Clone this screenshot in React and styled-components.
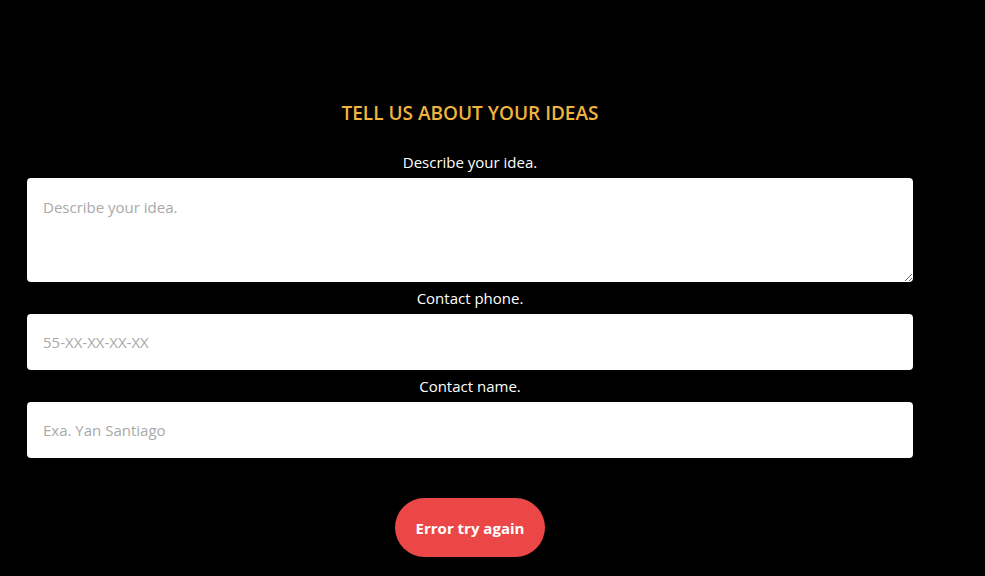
import React from "react";
import styled, { createGlobalStyle } from "styled-components";

const GlobalStyle = createGlobalStyle`
  body {
    margin: 0;
    background: #000000;
    font-family: "Open Sans", "Noto Sans", sans-serif;
  }
`;

const App = () => {
  return (
    <>
      <GlobalStyle />
      <Page>
        <Form onSubmit={(e) => e.preventDefault()}>
          <Title>TELL US ABOUT YOUR IDEAS</Title>
          <Label>Describe your idea.</Label>
          <TextArea placeholder="Describe your idea." />
          <Label>Contact phone.</Label>
          <Input placeholder="55-XX-XX-XX-XX" />
          <Label>Contact name.</Label>
          <Input placeholder="Exa. Yan Santiago" />
          <SubmitButton type="submit">Error try again</SubmitButton>
        </Form>
      </Page>
    </>
  );
};

export default App;

const Page = styled.div`
  width: 985px;
  height: 576px;
  background: #000000;
  overflow: hidden;
`;

const Form = styled.form`
  width: 886px;
  margin-left: 27px;
  padding-top: 100px;
  display: flex;
  flex-direction: column;
  align-items: center;
`;

const Title = styled.h2`
  margin: 0 0 20px;
  color: #f0b43c;
  font-size: 19px;
  font-weight: 600;
  line-height: 26px;
`;

const Label = styled.label`
  color: #ffffff;
  font-size: 15px;
  line-height: 20px;
  margin: 6px 0 6px;
`;

const fieldStyles = `
  box-sizing: border-box;
  width: 100%;
  border: none;
  border-radius: 4px;
  background: #ffffff;
  padding: 0 16px;
  font-family: "Open Sans", "Noto Sans", sans-serif;
  font-size: 15px;
  color: #333333;
  outline: none;
  &::placeholder {
    color: #a9a9a9;
  }
`;

const TextArea = styled.textarea`
  ${fieldStyles}
  height: 104px;
  padding-top: 19px;
  resize: vertical;
`;

const Input = styled.input`
  ${fieldStyles}
  height: 56px;
`;

const SubmitButton = styled.button`
  margin-top: 40px;
  width: 150px;
  height: 59px;
  border: none;
  border-radius: 30px;
  background: #ec4747;
  color: #ffffff;
  font-family: "Open Sans", "Noto Sans", sans-serif;
  font-size: 15px;
  font-weight: 700;
  cursor: pointer;
`;
